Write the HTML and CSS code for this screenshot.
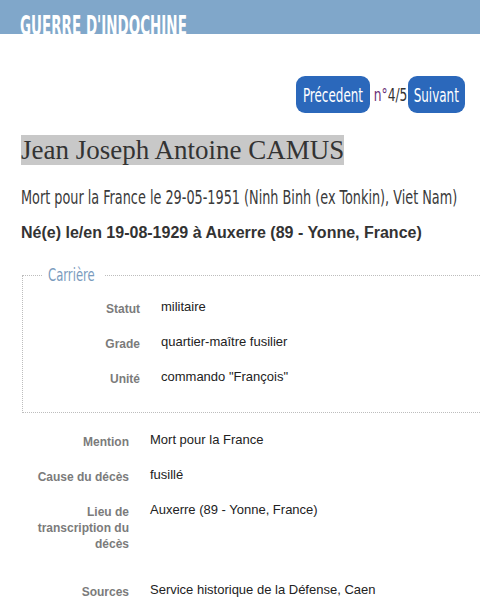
FILE: index.html
```html
<!DOCTYPE html>
<html lang="fr">
<head>
<meta charset="utf-8">
<title>Guerre d'Indochine</title>
<link rel="stylesheet" href="styles.css">
</head>
<body>
<header class="topbar"><span class="cond topbar-title">GUERRE D'INDOCHINE</span></header>
<nav class="pager">
  <a class="pager-btn btn-prev" href="#"><span class="cond btn-text">Précedent</span></a>
  <span class="cond pager-num"><span class="pager-n">n°</span>4/5</span>
  <a class="pager-btn btn-next" href="#"><span class="cond btn-text">Suivant</span></a>
</nav>
<main class="fiche">
  <h1 class="name"><span class="name-hl">Jean Joseph Antoine CAMUS</span></h1>
  <p class="death"><span class="cond death-text">Mort pour la France le 29-05-1951 (Ninh Binh (ex Tonkin), Viet Nam)</span></p>
  <p class="birth">Né(e) le/en 19-08-1929 à Auxerre (89 - Yonne, France)</p>
  <fieldset class="box">
    <legend class="box-legend"><span class="cond legend-text">Carrière</span></legend>
    <dl class="rows rows-inner">
      <dt>Statut</dt><dd>militaire</dd>
      <dt>Grade</dt><dd>quartier-maître fusilier</dd>
      <dt>Unité</dt><dd>commando "François"</dd>
    </dl>
  </fieldset>
  <dl class="rows rows-outer">
    <dt>Mention</dt><dd>Mort pour la France</dd>
    <dt>Cause du décès</dt><dd>fusillé</dd>
    <dt class="tall">Lieu de transcription du décès</dt><dd class="tall">Auxerre (89 - Yonne, France)</dd>
    <dt>Sources</dt><dd>Service historique de la Défense, Caen</dd>
  </dl>
</main>
</body>
</html>
```
FILE: styles.css
```css
html, body { margin: 0; padding: 0; background: #fff; }
body { font-family: "Liberation Sans", Arial, sans-serif; color: #222; }

/* condensed display face: fixed layout width, glyphs squeezed horizontally */
.cond {
  display: inline-block;
  font-family: "DejaVu Sans Condensed", "DejaVu Sans", sans-serif;
  white-space: nowrap;
  transform-origin: left center;
}

.topbar {
  height: 34px;
  box-sizing: border-box;
  background: #80a7ca;
  padding: 12px 0 0 20px;
  overflow: hidden;
}
.topbar-title {
  display: block;
  width: 167px;
  font-weight: bold;
  font-size: 27px;
  line-height: 27px;
  color: #fff;
  transform: scaleX(0.555);
}

.pager {
  display: flex;
  justify-content: flex-end;
  align-items: center;
  padding: 42px 15px 0 0;
}
.pager-btn {
  display: flex;
  align-items: center;
  justify-content: center;
  height: 37px;
  border-radius: 9px;
  background: #2b68bb;
  color: #fff;
  text-decoration: none;
}
.btn-prev { width: 74px; }
.btn-next { width: 57px; }
.btn-text {
  font-size: 19px;
  transform: scaleX(0.7);
  transform-origin: center center;
}
.pager-num {
  width: 38px;
  text-align: center;
  font-size: 17px;
  color: #333;
  transform: scaleX(0.8);
  transform-origin: center center;
}
.pager-n { color: #6a2f78; }

.fiche { padding: 0 0 0 21px; }

.name {
  margin: 23px 0 0;
  font-family: "Liberation Serif", Georgia, serif;
  font-weight: normal;
  font-size: 27px;
  line-height: 28px;
  color: #333;
}
.name-hl { background: #c8c8c8; }

.death {
  margin: 21px 0 0;
  font-size: 20px;
  line-height: 24px;
  color: #3a3a3a;
}
.death-text { width: 435px; transform: scaleX(0.713); }

.birth {
  margin: 14px 0 0;
  font-weight: bold;
  font-size: 16px;
  line-height: 20px;
  color: #333;
}

.box {
  margin: 22px 0 0 1px;
  padding: 0 0 8px;
  border: 1px dotted #bdbdbd;
  border-right: none;
}
.box-legend {
  margin-left: 20px;
  padding: 0 10px 0 5px;
  font-size: 18px;
  color: #7a9bbd;
  line-height: 20px;
}
.legend-text { width: 47px; transform: scaleX(0.72); }

.rows { display: grid; margin: 0; column-gap: 21px; }
.rows dt {
  text-align: right;
  font-weight: bold;
  font-size: 12px;
  line-height: 16px;
  color: #7b7b7b;
  padding-top: 2px;
  padding-bottom: 17px;
}
.rows dd {
  margin: 0;
  font-size: 13px;
  line-height: 16px;
  color: #222;
  padding-bottom: 19px;
}

.rows-inner { grid-template-columns: 117px 1fr; padding: 14px 0 0; }
.rows-outer { grid-template-columns: 108px 1fr; padding-top: 19px; }
.rows dd.tall { padding-bottom: 32px; }
.rows dt.tall { padding-bottom: 30px; }
```
